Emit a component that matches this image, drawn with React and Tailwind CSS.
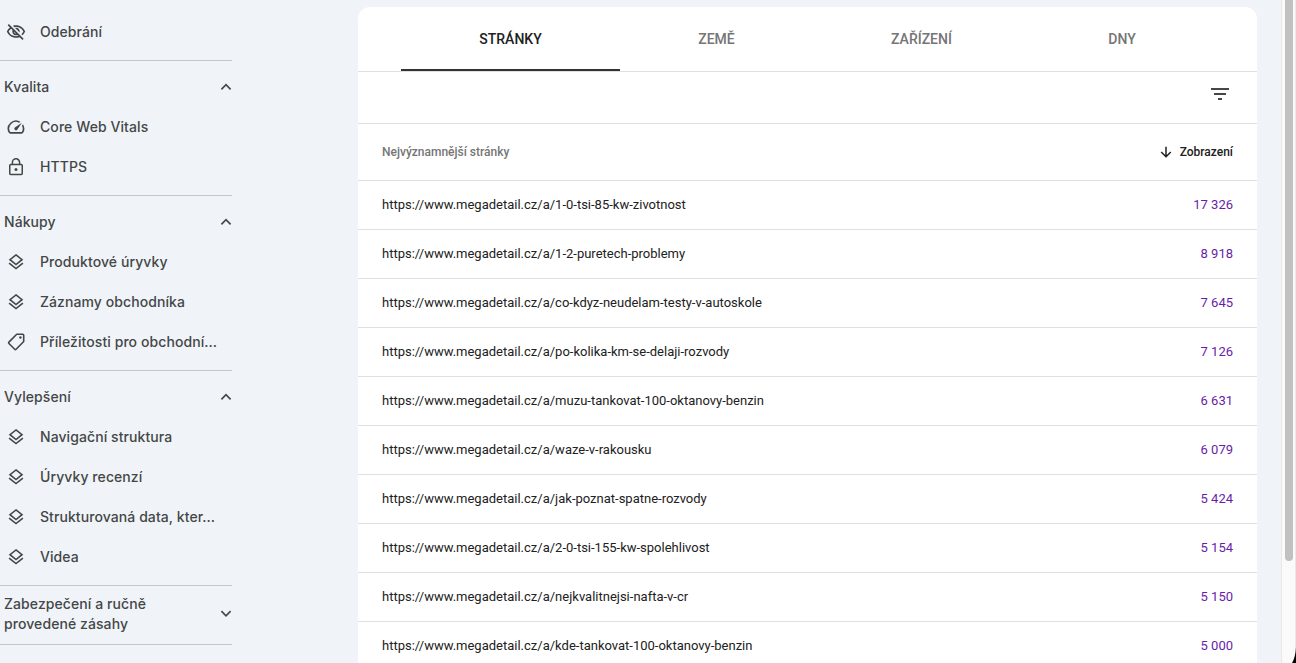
import React from 'react';
import { MdOutlineVisibilityOff, MdOutlineSpeed } from 'react-icons/md';

// ── Icons ──────────────────────────────────────────────────────────────────────
function LockIcon() {
  return (
    <svg viewBox="0 0 20 20" className="h-5 w-5" fill="none" stroke="currentColor" strokeWidth="1.5">
      <rect x="3.75" y="7.6" width="12.5" height="10" rx="1" />
      <path d="M6.4 7.6V5.4a3.6 3.6 0 0 1 7.2 0v2.2" />
      <circle cx="10" cy="12.6" r="1.5" fill="currentColor" stroke="none" />
    </svg>
  );
}

function LayersIcon() {
  return (
    <svg viewBox="0 0 20 20" className="h-5 w-5" fill="none" stroke="currentColor" strokeWidth="1.6">
      <path d="M10 2.9 16 7.7 10 12.5 4 7.7Z" />
      <path d="M3.1 11.2 10 16.6 16.9 11.2" />
    </svg>
  );
}

function TagIcon() {
  return (
    <svg viewBox="0 0 20 20" className="h-5 w-5" fill="none" stroke="currentColor" strokeWidth="1.6" strokeLinejoin="round">
      <path d="M10.7 2.3H16.7a1 1 0 0 1 1 1V9.5L10.1 17.3a1 1 0 0 1-1.4 0L2.9 11.5a1 1 0 0 1 0-1.4Z" />
      <circle cx="14.4" cy="5.5" r="1.2" fill="currentColor" stroke="none" />
    </svg>
  );
}

function Chevron({ open }) {
  return (
    <svg viewBox="0 0 12 12" className="h-3 w-3 shrink-0" fill="none" stroke="currentColor" strokeWidth="1.7">
      <path d={open ? 'M1.4 8.3 6 3.7 10.6 8.3' : 'M1.4 3.2 6 7.8 10.6 3.2'} />
    </svg>
  );
}

// ── Data ───────────────────────────────────────────────────────────────────────
const sections = [
  {
    title: 'Kvalita',
    items: [
      { label: 'Core Web Vitals', icon: <MdOutlineSpeed className="h-5 w-5" /> },
      { label: 'HTTPS', icon: <LockIcon /> },
    ],
  },
  {
    title: 'Nákupy',
    items: [
      { label: 'Produktové úryvky', icon: <LayersIcon /> },
      { label: 'Záznamy obchodníka', icon: <LayersIcon /> },
      { label: 'Příležitosti pro obchodní…', icon: <TagIcon /> },
    ],
  },
  {
    title: 'Vylepšení',
    items: [
      { label: 'Navigační struktura', icon: <LayersIcon /> },
      { label: 'Úryvky recenzí', icon: <LayersIcon /> },
      { label: 'Strukturovaná data, kter…', icon: <LayersIcon /> },
      { label: 'Videa', icon: <LayersIcon /> },
    ],
  },
];

const tabs = [
  { label: 'STRÁNKY', className: 'w-[219px] border-[#333] text-[#212121]' },
  { label: 'ZEMĚ', className: 'w-[192px] border-transparent pl-px text-[#757575]' },
  { label: 'ZAŘÍZENÍ', className: 'w-[218px] border-transparent pl-px text-[#757575]' },
  { label: 'DNY', className: 'w-[184px] border-transparent text-[#757575]' },
];

const rows = [
  ['1-0-tsi-85-kw-zivotnost', '17 326'],
  ['1-2-puretech-problemy', '8 918'],
  ['co-kdyz-neudelam-testy-v-autoskole', '7 645'],
  ['po-kolika-km-se-delaji-rozvody', '7 126'],
  ['muzu-tankovat-100-oktanovy-benzin', '6 631'],
  ['waze-v-rakousku', '6 079'],
  ['jak-poznat-spatne-rozvody', '5 424'],
  ['2-0-tsi-155-kw-spolehlivost', '5 154'],
  ['nejkvalitnejsi-nafta-v-cr', '5 150'],
  ['kde-tankovat-100-oktanovy-benzin', '5 000'],
];

// ── Sidebar ────────────────────────────────────────────────────────────────────
function NavItem({ icon, label }) {
  return (
    <a className="flex h-10 items-center gap-3.5 pl-1.5 whitespace-nowrap">
      {icon}
      <span>{label}</span>
    </a>
  );
}

function Sidebar() {
  return (
    <nav className="w-[232px] shrink-0 pt-3 font-['Inter',sans-serif] text-sm font-medium tracking-[0.08px] text-[#444746]">
      <div className="pb-2">
        <NavItem icon={<MdOutlineVisibilityOff className="h-5 w-5" />} label="Odebrání" />
      </div>
      {sections.map(s => (
        <div key={s.title} className="border-t border-[#c4c7c5] pt-1.5 pb-2">
          <div className="flex h-10 items-center justify-between pl-1">
            <span>{s.title}</span>
            <Chevron open />
          </div>
          {s.items.map(i => <NavItem key={i.label} {...i} />)}
        </div>
      ))}
      <div className="flex h-[60px] items-center justify-between border-y border-[#c4c7c5] pb-0.5 pl-1 leading-5">
        <span>Zabezpečení a ručně<br />provedené zásahy</span>
        <Chevron />
      </div>
    </nav>
  );
}

// ── Report table ───────────────────────────────────────────────────────────────
function Report() {
  return (
    <main className="ml-[126px] mt-[7px] w-[899px] shrink-0 rounded-t-xl bg-white">
      <div className="flex h-[65px] border-b border-[#e0e0e0] px-[43px] text-sm font-medium">
        {tabs.map(t => (
          <button key={t.label} className={`flex h-16 items-center justify-center border-b-2 pt-0.5 ${t.className}`}>
            {t.label}
          </button>
        ))}
      </div>
      <div className="flex h-[52px] justify-end border-b border-[#e0e0e0] pt-2.5 pr-[25px]">
        <svg viewBox="0 0 24 24" className="h-6 w-6" fill="#444746">
          <path d="M10 18h4v-2h-4zM3 6v2h18V6zm3 7h12v-2H6z" />
        </svg>
      </div>
      <div className="flex h-[57px] items-center justify-between border-b border-[#e0e0e0] px-6 text-xs font-medium">
        <span className="text-[#757575]">Nejvýznamnější stránky</span>
        <span className="flex items-center gap-2 text-[#212121]">
          <svg viewBox="0 0 12 12" className="h-3 w-3" fill="none" stroke="currentColor" strokeWidth="1.5">
            <path d="M6 .8V10.6M1.2 6 6 10.8 10.8 6" />
          </svg>
          Zobrazení
        </span>
      </div>
      {rows.map(([slug, views]) => (
        <div key={slug} className="flex h-[49px] items-center justify-between border-b border-[#e0e0e0] px-6 text-[13px]">
          <span className="text-[#212121]">https://www.megadetail.cz/a/{slug}</span>
          <span className="text-[#681da8]">{views}</span>
        </div>
      ))}
    </main>
  );
}

export default function App() {
  return (
    <div className="relative flex h-[663px] w-[1296px] overflow-hidden bg-[#f0f4f9] font-['Roboto',sans-serif] antialiased">
      <Sidebar />
      <Report />
      {/* Scrollbar */}
      <div className="ml-auto flex w-[15px] shrink-0 justify-center border-x border-[#e8e8e8] bg-[#fafafa]">
        <div className="h-[561px] w-2 rounded-b-full bg-[#c1c1c1]" />
      </div>
      {/* Rounded window corner */}
      <svg viewBox="0 0 4 20" className="absolute right-0 bottom-0 h-5 w-1">
        <path d="M4 4Q3.6 14 0 20H4Z" fill="#000" />
      </svg>
    </div>
  );
}
